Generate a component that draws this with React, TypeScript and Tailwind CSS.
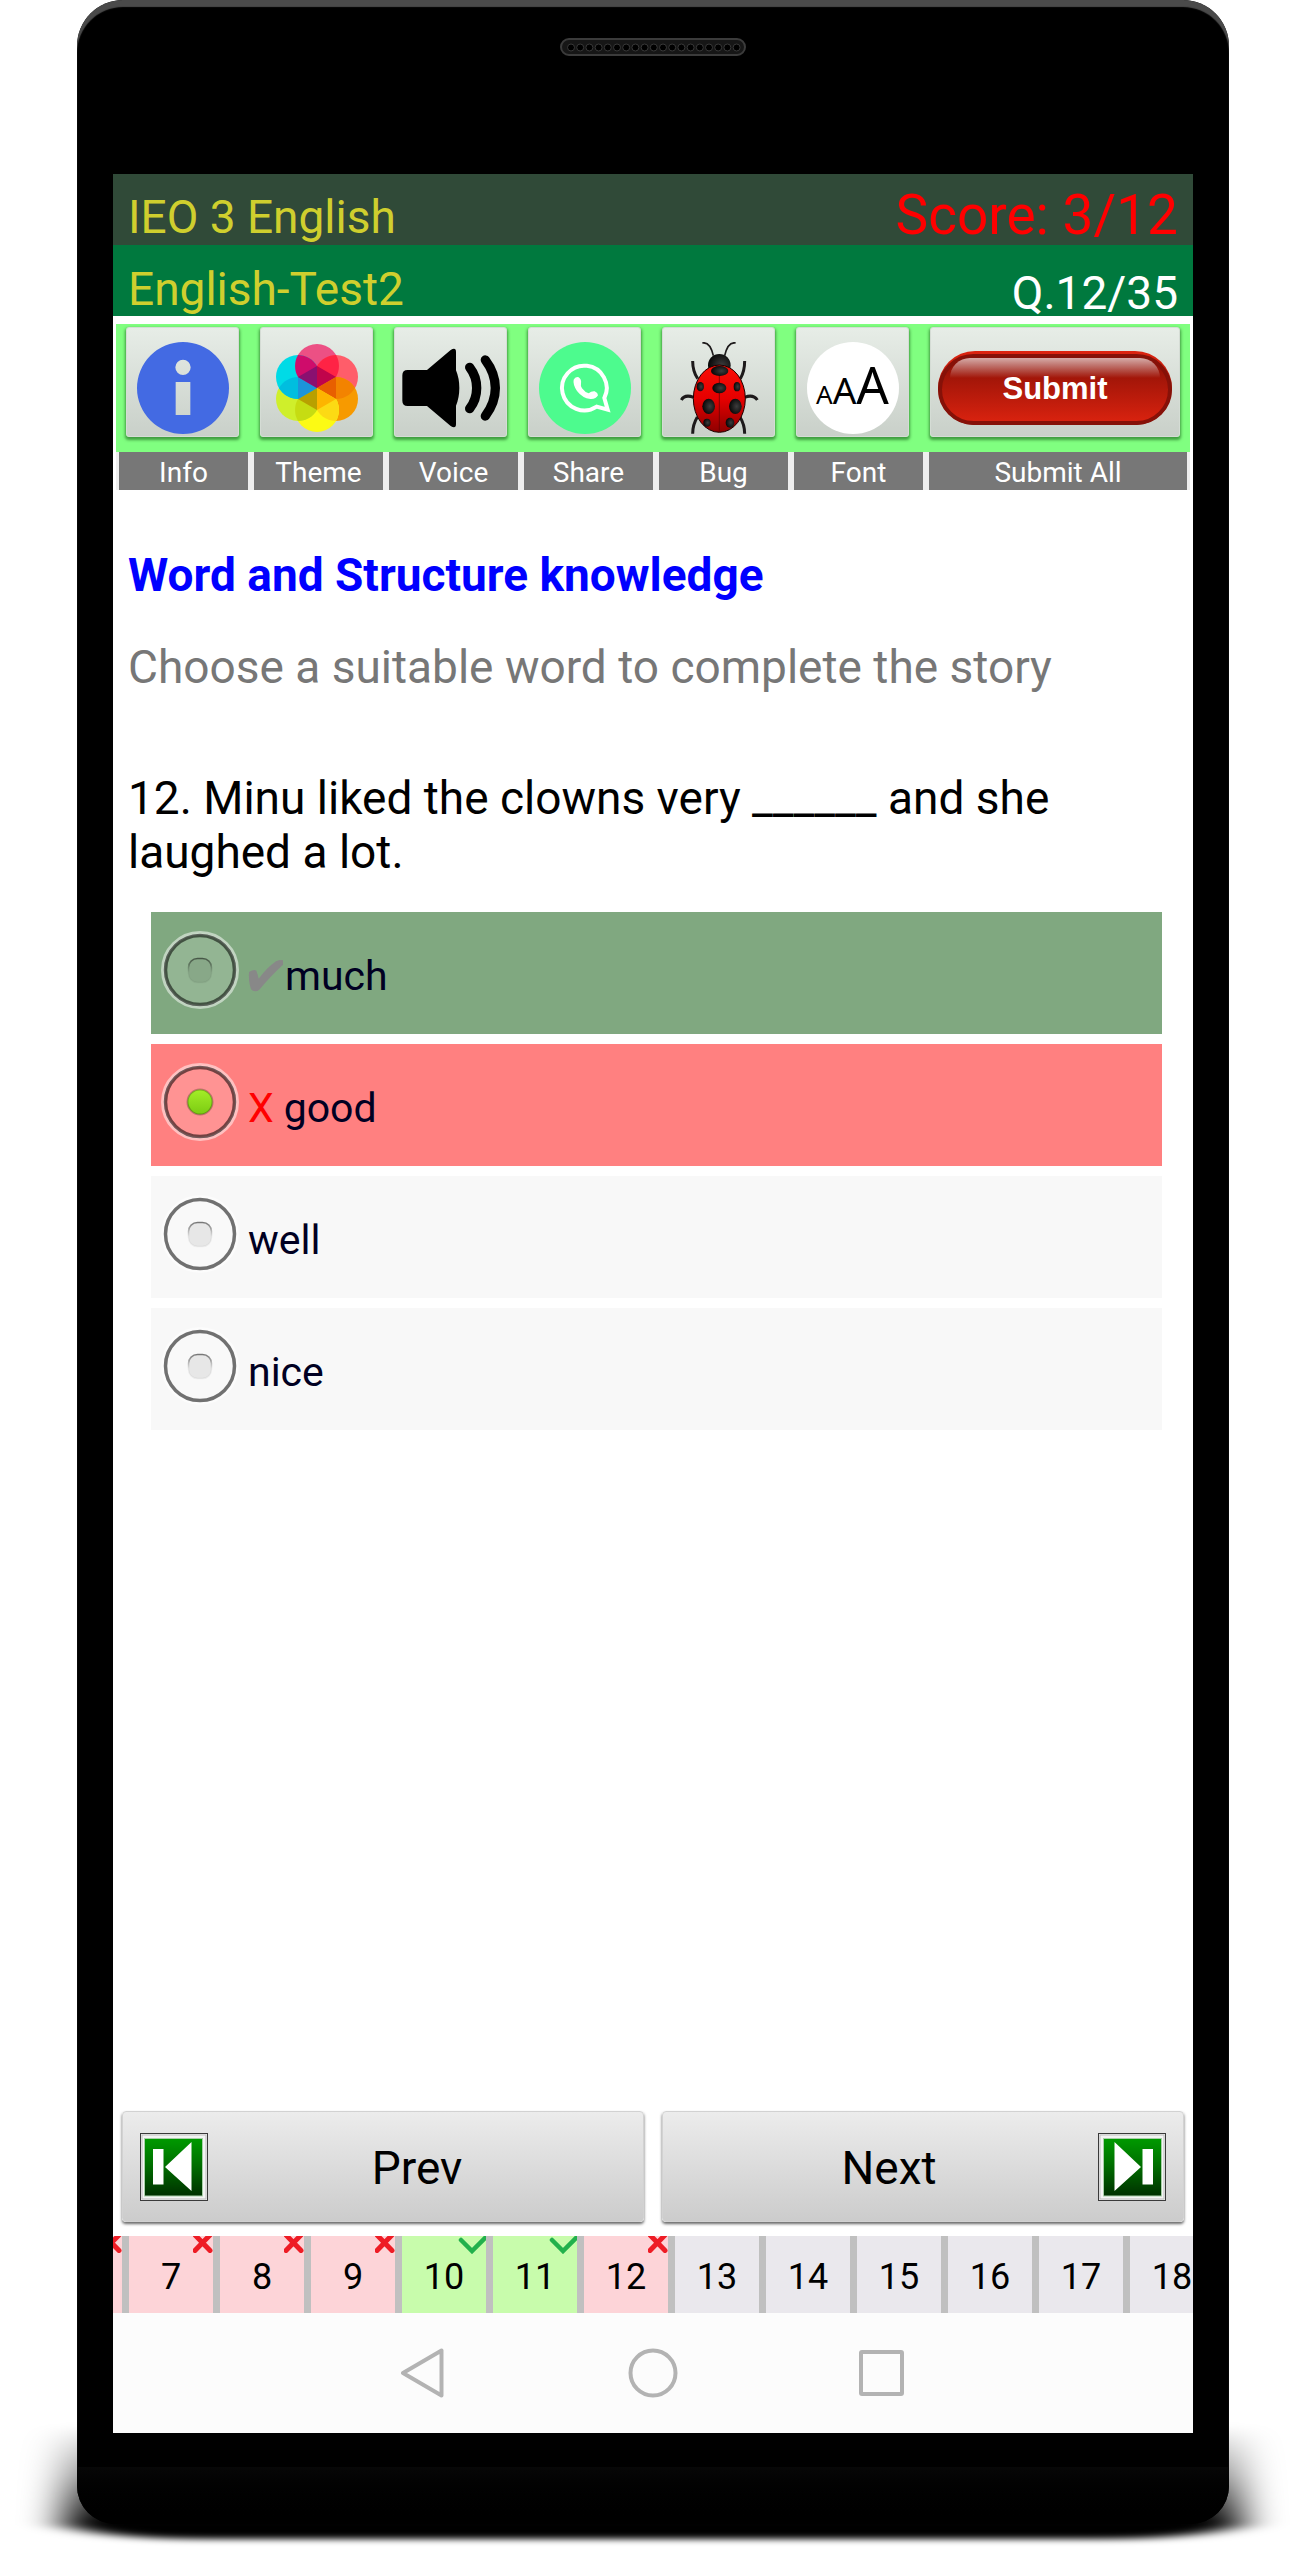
import { useState, type ReactNode } from "react";

const petals = [
  { x: 0, y: -66, color: "#ec5084" },
  { x: 57, y: -33, color: "#ff5d6a" },
  { x: 57, y: 33, color: "#f79a00" },
  { x: 0, y: 66, color: "#fcfa14" },
  { x: -57, y: 33, color: "#cfef2b" },
  { x: -57, y: -33, color: "#00dbe6" },
];

const overlaps = [
  { d: "M0 0A66 66 0 0 1 57 -99A66 66 0 0 1 0 0", color: "#ff2345" },
  { d: "M0 0A66 66 0 0 1 114 0A66 66 0 0 1 0 0", color: "#f38300" },
  { d: "M0 0A66 66 0 0 1 57 99A66 66 0 0 1 0 0", color: "#fcda14" },
  { d: "M0 0A66 66 0 0 1 -57 99A66 66 0 0 1 0 0", color: "#c6dc12" },
  { d: "M0 0A66 66 0 0 1 -114 0A66 66 0 0 1 0 0", color: "#00bedf" },
  { d: "M0 0A66 66 0 0 1 -57 -99A66 66 0 0 1 0 0", color: "#cf0c6b" },
];

const wedges = [
  { d: "M0 0L0 -66L57 -33Z", color: "#c0044b" },
  { d: "M0 0L57 -33L57 33Z", color: "#e85f00" },
  { d: "M0 0L57 33L0 66Z", color: "#fdb500" },
  { d: "M0 0L0 66L-57 33Z", color: "#b8a000" },
  { d: "M0 0L-57 33L-57 -33Z", color: "#1c94da" },
  { d: "M0 0L-57 -33L0 -66Z", color: "#8a1070" },
];

function InfoIcon() {
  return (
    <svg viewBox="82 96 276 276" className="size-[92px]" aria-hidden="true">
      <path
        fillRule="evenodd"
        fill="#436ae3"
        d="M82 234a138 138 0 1 0 276 0a138 138 0 1 0 -276 0ZM197 172a23 23 0 1 0 46 0a23 23 0 1 0 -46 0ZM198 216H242V315H198Z"
      />
    </svg>
  );
}

function ThemeIcon() {
  return (
    <svg viewBox="-138 -138 276 276" className="size-[92px]" aria-hidden="true">
      {petals.map((p) => (
        <circle key={p.color} cx={p.x} cy={p.y} r="66" fill={p.color} />
      ))}
      {overlaps.map((o) => (
        <path key={o.color} d={o.d} fill={o.color} />
      ))}
      {wedges.map((w) => (
        <path key={w.color} d={w.d} fill={w.color} />
      ))}
    </svg>
  );
}

function VoiceIcon() {
  return (
    <svg viewBox="884 96 276 276" className="size-[92px] overflow-visible" aria-hidden="true">
      <path d="M892 180H950L1021 120Q1037 110 1037 126V181Q1047 205 1047 234T1037 287V342Q1037 358 1021 348L950 288H892Q876 288 876 272V196Q876 180 892 180Z" />
      <path
        d="M1078 172Q1099 199 1099 234T1078 296M1125 150Q1155 190 1155 234T1125 318"
        fill="none"
        stroke="#000"
        strokeWidth="28"
        strokeLinecap="round"
      />
    </svg>
  );
}

function ShareIcon() {
  return (
    <svg viewBox="87 96 276 276" className="size-[92px]" aria-hidden="true">
      <circle cx="225" cy="234" r="138" fill="#4dfb8e" />
      <path
        d="M283 264A67 67 0 1 0 260 290L293 299Z"
        fill="none"
        stroke="#fff"
        strokeWidth="12"
        strokeLinejoin="miter"
      />
      <path
        d="M191 209Q196 199 206 202Q215 208 213 221Q211 228 216 235Q225 247 236 250Q244 243 254 244Q264 249 264 256Q258 268 241 267Q217 264 201 243Q188 223 191 209Z"
        fill="#fff"
      />
    </svg>
  );
}

function BugIcon() {
  return (
    <svg viewBox="489 96 276 276" className="size-[92px]" aria-hidden="true">
      <defs>
        <linearGradient id="shell" x1="0" y1="0" x2="0" y2="1">
          <stop offset="0" stopColor="#fb0d06" />
          <stop offset="0.5" stopColor="#e60000" />
          <stop offset="1" stopColor="#8d0000" />
        </linearGradient>
        <radialGradient id="spot" cx="0.6" cy="0.5" r="0.6">
          <stop offset="0" stopColor="#3d3d3d" />
          <stop offset="1" stopColor="#050505" />
        </radialGradient>
      </defs>
      <g fill="none" stroke="#1d1a1b">
        <path d="M577 99Q600 94 610 137M677 99Q654 94 644 137" strokeWidth="5" />
        <path
          d="M548 153Q548 184 563 206M704 153Q704 184 691 206M514 270Q524 252 551 262M742 270Q730 252 704 262M548 371Q548 344 562 321M704 371Q704 344 690 321"
          strokeWidth="9"
        />
      </g>
      <ellipse cx="628" cy="166" rx="34" ry="34" fill="url(#spot)" />
      <ellipse cx="628" cy="266" rx="78" ry="101" fill="url(#shell)" stroke="#1a0000" strokeWidth="3" />
      <path d="M628 166V366" stroke="#5c0000" strokeWidth="2" />
      <g fill="url(#spot)">
        <ellipse cx="629" cy="183" rx="26" ry="15" />
        <ellipse cx="628" cy="234" rx="21" ry="16" />
        <ellipse cx="571" cy="230" rx="11" ry="14" />
        <ellipse cx="681" cy="230" rx="10" ry="14" />
        <ellipse cx="596" cy="289" rx="19" ry="23" />
        <ellipse cx="676" cy="289" rx="19" ry="23" />
        <ellipse cx="591" cy="338" rx="11" ry="12" />
        <ellipse cx="660" cy="338" rx="13" ry="15" />
      </g>
    </svg>
  );
}

function FontIcon() {
  return (
    <span className="flex size-[92px] items-baseline justify-center rounded-full bg-white pt-[16px] font-['Noto_Sans',sans-serif] text-black">
      <span className="text-[26px] leading-[52px]">A</span>
      <span className="text-[37px] leading-[52px]">A</span>
      <span className="text-[51px] leading-[52px]">A</span>
    </span>
  );
}

function SkipIcon({ flip = false }: { flip?: boolean }) {
  return (
    <svg viewBox="0 0 68 68" className={flip ? "size-[68px] shrink-0 -scale-x-100" : "size-[68px] shrink-0"} aria-hidden="true">
      <defs>
        <linearGradient id="skip" x1="0" y1="0" x2="0" y2="1">
          <stop offset="0" stopColor="#009a00" />
          <stop offset="0.45" stopColor="#007000" />
          <stop offset="1" stopColor="#003000" />
        </linearGradient>
      </defs>
      <rect x="0.5" y="0.5" width="67" height="67" fill="#f4f4f4" stroke="#3a3a3a" />
      <rect x="2" y="2" width="64" height="64" fill="none" stroke="#bdbdbd" />
      <rect x="4.5" y="5.5" width="58" height="57.5" fill="url(#skip)" stroke="#a8cfa8" />
      <path d="M13 16H23.5V51.5H13ZM51.5 9V58L25 34Z" fill="#fff" />
    </svg>
  );
}

function RadioFace({ checked }: { checked: boolean }) {
  return (
    <svg viewBox="0 0 78 78" className="pointer-events-none col-start-1 row-start-1 size-[78px]" aria-hidden="true">
      <defs>
        <linearGradient id="dot" x1="0" y1="0" x2="0" y2="1">
          <stop offset="0" stopColor="#a4ee28" />
          <stop offset="1" stopColor="#7bcb12" />
        </linearGradient>
        <linearGradient id="dent" x1="0" y1="0" x2="0" y2="1">
          <stop offset="0" stopColor="#000" stopOpacity="0.5" />
          <stop offset="0.6" stopColor="#000" stopOpacity="0.05" />
        </linearGradient>
      </defs>
      <circle cx="39" cy="39" r="37" fill="#fff" fillOpacity="0.15" stroke="#fff" strokeOpacity="0.5" strokeWidth="4" />
      <circle cx="39" cy="39" r="34.5" fill="none" stroke="#000" strokeOpacity="0.55" strokeWidth="3.5" />
      {checked ? (
        <circle cx="39" cy="39" r="12.5" fill="url(#dot)" stroke="#000" strokeOpacity="0.25" strokeWidth="2" />
      ) : (
        <rect x="27.5" y="27.5" width="23" height="24" rx="9" fill="#000" fillOpacity="0.07" stroke="url(#dent)" strokeWidth="1.5" />
      )}
    </svg>
  );
}

const tools: { label: string; icon: ReactNode }[] = [
  { label: "Info", icon: <InfoIcon /> },
  { label: "Theme", icon: <ThemeIcon /> },
  { label: "Voice", icon: <VoiceIcon /> },
  { label: "Share", icon: <ShareIcon /> },
  { label: "Bug", icon: <BugIcon /> },
  { label: "Font", icon: <FontIcon /> },
];

const options = [
  { text: "much", row: "bg-[#80a880]", mark: "tick" },
  { text: "good", row: "bg-[#ff8080]", mark: "cross" },
  { text: "well", row: "bg-[#f8f8f8]", mark: "" },
  { text: "nice", row: "bg-[#f8f8f8]", mark: "" },
];

const questions = [
  { n: 7, state: "wrong" },
  { n: 8, state: "wrong" },
  { n: 9, state: "wrong" },
  { n: 10, state: "right" },
  { n: 11, state: "right" },
  { n: 12, state: "wrong" },
  { n: 13, state: "open" },
  { n: 14, state: "open" },
  { n: 15, state: "open" },
  { n: 16, state: "open" },
  { n: 17, state: "open" },
  { n: 18, state: "open" },
];

const cellColor: Record<string, string> = {
  wrong: "bg-[#fdd4d8]",
  right: "bg-[#c8fcac]",
  open: "bg-[#eae8ed]",
};

const toolButton =
  "flex h-[110px] rounded-[3px] border border-[#d5dcd5] bg-linear-to-b from-[#e7ede7] to-[#c9d0c9] shadow-[0_2px_3px_1px_rgba(0,60,0,0.5)]";
const stepButton =
  "flex h-[111px] flex-1 items-center rounded-[4px] border border-[#d2d2d2] bg-linear-to-b from-[#ececec] to-[#cccccc] px-[17px] text-[46px] leading-[54px] text-black shadow-[0_2px_3px_rgba(0,0,0,0.6)]";
const caption = "h-[38px] bg-[#777777] pt-[2px] text-center text-[28px] leading-[38px] text-white";

function WrongMark() {
  return (
    <svg viewBox="0 0 20 17" className="absolute top-0 right-0 h-[17px] w-[20px]" aria-hidden="true">
      <path d="M2 -1L17 14.500M17 -1L2 14.500" stroke="#ee1c25" strokeWidth="5" strokeLinecap="round" />
    </svg>
  );
}

function RightMark() {
  return (
    <svg viewBox="0 0 30 18" className="absolute top-0 right-[-2px] h-[18px] w-[30px]" aria-hidden="true">
      <path d="M3 4L14 15L30 -1" fill="none" stroke="#22b14c" strokeWidth="4.5" strokeLinecap="round" />
    </svg>
  );
}

function Speaker() {
  return (
    <svg viewBox="0 0 186 18" className="h-[18px] w-[186px]" aria-hidden="true">
      <rect x="1" y="1" width="184" height="16" rx="8" fill="#161616" stroke="#3b3b3b" strokeWidth="2" />
      {Array.from({ length: 19 }, (_, i) => (
        <circle key={i} cx={11 + i * 9.2} cy="9.5" r="3.5" fill="#000" stroke="#383838" />
      ))}
    </svg>
  );
}

function GroundShadow() {
  return (
    <svg
      viewBox="0 0 1305 150"
      preserveAspectRatio="none"
      className="absolute inset-x-0 bottom-0 h-[150px] w-full"
      aria-hidden="true"
    >
      <defs>
        <linearGradient id="ground" x1="0" y1="0" x2="0" y2="1">
          <stop offset="0" stopOpacity="0" />
          <stop offset="0.45" stopOpacity="0.45" />
          <stop offset="0.85" stopOpacity="1" />
        </linearGradient>
        <filter id="soft" x="-10%" y="-30%" width="120%" height="160%">
          <feGaussianBlur stdDeviation="20 3" />
        </filter>
      </defs>
      <path d="M64 25H1241V125Q1200 139 1100 139H205Q105 139 64 125Z" fill="url(#ground)" filter="url(#soft)" />
    </svg>
  );
}

export default function App() {
  const [answer, setAnswer] = useState("good");

  return (
    <div className="relative flex min-h-screen flex-col overflow-hidden bg-white pr-[76px] pb-[26px] pl-[77px] font-[Roboto,sans-serif]">
      <GroundShadow />
      <div className="relative flex flex-1 flex-col rounded-t-[46px] rounded-b-[38px] bg-black px-9 shadow-[inset_0_7px_1px_#4a4a4a]">
        <div className="flex h-[174px] shrink-0 justify-center pt-[38px]">
          <Speaker />
        </div>

        <div className="flex flex-1 flex-col overflow-hidden bg-white">
          <header>
            <div className="flex h-[71px] items-end justify-between bg-[#304a38] px-[15px]">
              <h1 className="text-[46px] leading-[56px] text-[#cfcf2e]">IEO 3 English</h1>
              <p className="text-[55px] leading-[60px] text-[#ff0000]">Score: 3/12</p>
            </div>
            <div className="flex h-[71px] items-end justify-between bg-[#00793e] px-[15px]">
              <p className="text-[46px] leading-[54px] text-[#cfcf2e]">English-Test2</p>
              <p className="text-[46px] leading-[46px] text-white">Q.12/35</p>
            </div>
          </header>

          <div className="mx-[3px] mt-2">
            <div className="flex h-32 gap-[21px] bg-[#80ff80] px-[10px] pt-[3px]">
              {tools.map((t) => (
                <button key={t.label} type="button" aria-label={t.label} className={`${toolButton} w-[113px] items-end justify-center pb-[2px]`}>
                  {t.icon}
                </button>
              ))}
              <button type="button" className={`${toolButton} flex-1 items-center px-[7px] pt-[11px]`}>
                <span className="flex h-[74px] w-full rounded-full bg-linear-to-b from-[#dd2410] to-[#7f1108] pt-[3px]">
                  <span className="relative flex w-full items-center justify-center rounded-full border-[4px] border-[#861108] bg-linear-to-b from-[#8b1006] to-[#d8220f] font-['Liberation_Sans',sans-serif] text-[31px] leading-[36px] font-bold text-white">
                    <span className="absolute inset-x-[8px] top-0 h-[20px] rounded-t-[24px] bg-linear-to-b from-white/65 to-white/0" />
                    Submit
                  </span>
                </span>
              </button>
            </div>
            <div className="flex gap-[6px] bg-[#eeeeee] px-[3px]">
              {tools.map((t) => (
                <span key={t.label} className={`${caption} w-[129px]`}>
                  {t.label}
                </span>
              ))}
              <span className={`${caption} flex-1`}>Submit All</span>
            </div>
          </div>

          <main className="flex-1 pt-[58px]">
            <div className="px-[15px] text-[46px] leading-[54px]">
              <h2 className="font-bold text-[#0000ff]">Word and Structure knowledge</h2>
              <p className="mt-[38px] text-[#777777]">Choose a suitable word to complete the story</p>
              <p id="question" className="mt-[77px] text-black">
                12. Minu liked the clowns very ______ and she laughed a lot.
              </p>
            </div>
            <div role="radiogroup" aria-labelledby="question" className="mt-[33px] mr-[31px] ml-[38px] flex flex-col gap-[10px]">
              {options.map((o) => (
                <label key={o.text} className={`flex h-[122px] gap-[9px] pl-[10px] ${o.row}`}>
                  <span className="grid pt-[19px]">
                    <input
                      type="radio"
                      name="answer"
                      value={o.text}
                      checked={answer === o.text}
                      onChange={() => setAnswer(o.text)}
                      className="col-start-1 row-start-1 size-[78px] appearance-none rounded-full"
                    />
                    <RadioFace checked={answer === o.text} />
                  </span>
                  <span className="flex pt-[40px] text-[41px] leading-[48px] text-[#000022]">
                    {o.mark === "tick" && (
                      <svg viewBox="327 159 111 144" className="h-[48px] w-[37px]" role="img" aria-label="Correct">
                        <path
                          d="M330 219Q345 210 352 215Q357 228 359 239Q385 205 411 187Q424 181 432 184V197Q391 235 361 272Q350 281 337 272Q328 252 330 219Z"
                          fill="#888888"
                        />
                      </svg>
                    )}
                    {o.mark === "cross" && <span className="mr-[10px] text-[#ff0000]">X</span>}
                    {o.text}
                  </span>
                </label>
              ))}
            </div>
          </main>

          <div className="flex gap-[18px] px-[9px] pb-[14px]">
            <button type="button" className={stepButton}>
              <SkipIcon />
              <span className="flex-1 pt-[2px]">Prev</span>
            </button>
            <button type="button" className={stepButton}>
              <span className="flex-1 pt-[2px]">Next</span>
              <SkipIcon flip />
            </button>
          </div>

          <nav aria-label="Questions" className="overflow-hidden">
            <ol className="flex">
              <li className="w-[9px] shrink-0">
                <button type="button" aria-label="6" className={`relative block h-[77px] w-full overflow-hidden ${cellColor.wrong}`}>
                  <WrongMark />
                </button>
              </li>
              {questions.map((q) => (
                <li key={q.n} className="w-[91px] shrink-0">
                  <button
                    type="button"
                    className={`relative h-[77px] w-full border-l-[7px] border-[#c0c0c0] pt-1 text-[36px] leading-[42px] text-black ${cellColor[q.state]}`}
                  >
                    {q.n}
                    {q.state === "wrong" && <WrongMark />}
                    {q.state === "right" && <RightMark />}
                  </button>
                </li>
              ))}
            </ol>
          </nav>

          <div className="flex h-[120px] items-center justify-center gap-[180px] bg-[#fcfcfc]">
            <button type="button" aria-label="Back">
              <svg viewBox="0 0 50 50" className="size-[50px]" fill="none" stroke="#b3b3b3" strokeWidth="4" strokeLinejoin="round">
                <path d="M43.5 2.5V47.5L5 25Z" />
              </svg>
            </button>
            <button type="button" aria-label="Home">
              <svg viewBox="0 0 50 50" className="size-[50px]" fill="none" stroke="#b3b3b3" strokeWidth="4">
                <circle cx="25" cy="25" r="22.5" />
              </svg>
            </button>
            <button type="button" aria-label="Recent apps">
              <svg viewBox="0 0 50 50" className="size-[50px]" fill="none" stroke="#b3b3b3" strokeWidth="4" strokeLinejoin="round">
                <rect x="3" y="4" width="41" height="42" rx="1" />
              </svg>
            </button>
          </div>
        </div>

        <div className="-mx-9 mt-[34px] h-[57px] rounded-b-[38px] bg-linear-to-b from-[#070707] to-black" />
      </div>
    </div>
  );
}
